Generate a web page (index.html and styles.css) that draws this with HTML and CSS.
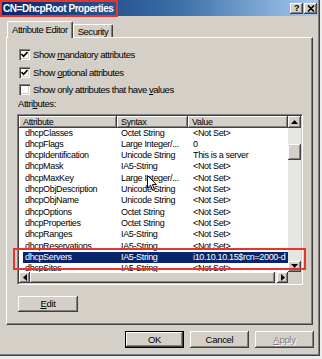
FILE: index.html
```html
<!DOCTYPE html>
<html lang="en">
<head>
    <meta charset="UTF-8">
    <title>CN=DhcpRoot Properties</title>
    <link rel="stylesheet" href="styles.css">
</head>
<body>
    <div class="dialog">
        <div class="titlebar">
            <span class="title">CN=DhcpRoot Properties</span>
            <div class="title-buttons">
                <span class="tbtn help">?</span>
                <span class="tbtn">
                    <svg width="8" height="7" viewBox="0 0 8 7"><path d="M1 0.5 L7 6.5 M7 0.5 L1 6.5" stroke="#000" stroke-width="1.6"/></svg>
                </span>
            </div>
        </div>

        <div class="tabs">
            <div class="tab active">Attribute Editor</div>
            <div class="tab">Security</div>
        </div>

        <div class="panel">
            <div class="option"><span class="check"><svg width="7" height="7" viewBox="0 0 7 7"><path d="M0.5 3 L2.6 5.4 L6.5 1" fill="none" stroke="#000" stroke-width="1.6"/></svg></span><span>Show <u>m</u>andatory attributes</span></div>
            <div class="option"><span class="check"><svg width="7" height="7" viewBox="0 0 7 7"><path d="M0.5 3 L2.6 5.4 L6.5 1" fill="none" stroke="#000" stroke-width="1.6"/></svg></span><span>Show <u>o</u>ptional attributes</span></div>
            <div class="option"><span class="check"></span><span>Show only attributes that have <u>v</u>alues</span></div>
            <div class="label">Attri<u>b</u>utes:</div>

            <div class="listview">
                <div class="lv-body">
                    <div class="lv-header">
                        <span>Attribute</span>
                        <span>Syntax</span>
                        <span>Value</span>
                    </div>
                    <div class="row"><span>dhcpClasses</span><span>Octet String</span><span>&lt;Not Set&gt;</span></div>
                    <div class="row"><span>dhcpFlags</span><span>Large Integer/...</span><span>0</span></div>
                    <div class="row"><span>dhcpIdentification</span><span>Unicode String</span><span>This is a server</span></div>
                    <div class="row"><span>dhcpMask</span><span>IA5-String</span><span>&lt;Not Set&gt;</span></div>
                    <div class="row"><span>dhcpMaxKey</span><span>Large Integer/...</span><span>&lt;Not Set&gt;</span></div>
                    <div class="row"><span>dhcpObjDescription</span><span>Unicode String</span><span>&lt;Not Set&gt;</span></div>
                    <div class="row"><span>dhcpObjName</span><span>Unicode String</span><span>&lt;Not Set&gt;</span></div>
                    <div class="row"><span>dhcpOptions</span><span>Octet String</span><span>&lt;Not Set&gt;</span></div>
                    <div class="row"><span>dhcpProperties</span><span>Octet String</span><span>&lt;Not Set&gt;</span></div>
                    <div class="row"><span>dhcpRanges</span><span>IA5-String</span><span>&lt;Not Set&gt;</span></div>
                    <div class="row"><span>dhcpReservations</span><span>IA5-String</span><span>&lt;Not Set&gt;</span></div>
                    <div class="row selected"><span>dhcpServers</span><span>IA5-String</span><span>i10.10.10.15$rcn=2000-d</span></div>
                    <div class="row"><span>dhcpSites</span><span>IA5-String</span><span>&lt;Not Set&gt;</span></div>
                </div>
                <div class="vscroll">
                    <span class="sbtn"><svg width="7" height="4" viewBox="0 0 7 4"><polygon points="3.5,0 7,4 0,4" fill="#000"/></svg></span>
                    <span class="vthumb"></span>
                    <span class="sbtn down"><svg width="7" height="4" viewBox="0 0 7 4"><polygon points="0,0 7,0 3.5,4" fill="#000"/></svg></span>
                </div>
                <div class="hscroll">
                    <span class="sbtn narrow"><svg width="4" height="7" viewBox="0 0 4 7"><polygon points="4,0 4,7 0,3.5" fill="#000"/></svg></span>
                    <span class="hthumb"></span>
                    <span class="sbtn narrow"><svg width="4" height="7" viewBox="0 0 4 7"><polygon points="0,0 4,3.5 0,7" fill="#000"/></svg></span>
                </div>
                <div class="corner"></div>
            </div>

            <button class="btn edit"><u>E</u>dit</button>
        </div>

        <div class="footer">
            <button class="btn default">OK</button>
            <button class="btn">Cancel</button>
            <button class="btn disabled"><u>A</u>pply</button>
        </div>

        <!-- annotation boxes and pointer drawn over the dialog -->
        <div class="mark mark-title"></div>
        <div class="mark mark-row"></div>
        <svg class="cursor" width="11" height="17" viewBox="0 0 11 17">
            <polygon points="0.5,0.5 0.5,13 3.5,10.2 5.8,15.5 7.6,14.7 5.4,9.6 9.5,9.6" fill="#fff" stroke="#000" stroke-width="1"/>
        </svg>
    </div>
</body>
</html>
```

FILE: styles.css
```css
* {
    box-sizing: border-box;
}
body {
    margin: 0;
    background: #ececec;
    font-family: "Liberation Sans", Arial, sans-serif;
    font-size: 9.5px;
    letter-spacing: -0.45px;
    color: #000;
}
.dialog {
    position: relative;
    width: 320px;
    height: 356px;
    background: #d4d0c8;
    box-shadow: inset -1px -1px #404040, inset -2px -2px #808080;
}

/* title bar */
.titlebar {
    height: 16px;
    margin-right: 2px;
    padding: 0 1px 0 3px;
    display: flex;
    align-items: center;
    background: linear-gradient(to right, #0a246a, #3a6ea5 55%, #a6caf0);
}
.title {
    color: #fff;
    font-weight: bold;
    font-size: 10px;
    letter-spacing: -0.45px;
}
.title-buttons {
    margin-left: auto;
    display: flex;
    gap: 1px;
}
.tbtn {
    width: 13px;
    height: 11px;
    display: flex;
    align-items: center;
    justify-content: center;
    background: #d4d0c8;
    box-shadow: inset -1px -1px #404040, inset 1px 1px #fff, inset -2px -2px #808080;
}
.help {
    font-weight: bold;
    font-size: 9px;
    line-height: 11px;
}

/* tabs */
.tabs {
    display: flex;
    align-items: flex-end;
    height: 16px;
    margin-top: 5px;
    padding-left: 7px;
}
.tab {
    height: 13px;
    padding: 0 4px;
    display: flex;
    align-items: center;
    background: #d4d0c8;
    border: 1px solid;
    border-color: #fff #404040 transparent #fff;
    border-bottom: none;
    border-radius: 2px 2px 0 0;
    box-shadow: inset -1px 0 #808080;
}
.tab.active {
    height: 17px;
    margin-bottom: -1px;
    position: relative;
    z-index: 1;
    padding-bottom: 2px;
}
.panel {
    margin-left: 6px;
    width: 307px;
    height: 288px;
    padding: 8px 10px 0 10px;
    border: 1px solid;
    border-color: #fff #404040 #404040 #fff;
    box-shadow: inset -1px -1px #808080;
}

/* checkboxes */
.option {
    height: 17.5px;
    display: flex;
    align-items: center;
    padding-left: 2px;
}
.check {
    width: 11px;
    height: 11px;
    margin-right: 3px;
    display: flex;
    align-items: center;
    justify-content: center;
    background: #fff;
    box-shadow: inset 1px 1px #808080, inset 2px 2px #404040, inset -1px -1px #fff, inset -2px -2px #d4d0c8;
}
.label {
    height: 10px;
    line-height: 10px;
    padding-left: 1px;
}

/* list view */
.listview {
    width: 286px;
    height: 171px;
    margin-top: 5px;
    padding: 1px;
    font-size: 9px;
    letter-spacing: -0.35px;
    background: #fff;
    border: 1px solid;
    border-color: #808080 #fff #fff #808080;
    box-shadow: inset 1px 1px #404040, inset -1px -1px #d4d0c8;
    display: grid;
    grid-template-columns: 1fr 13px;
    grid-template-rows: 1fr 11px;
}
.lv-body {
    overflow: hidden;
}
.lv-header {
    display: grid;
    grid-template-columns: 98px 71px 100px;
    height: 12px;
}
.lv-header span {
    padding-left: 4px;
    line-height: 12px;
    background: #d4d0c8;
    box-shadow: inset -1px -1px #404040, inset 1px 1px #fff, inset -2px -2px #808080;
}
.row {
    display: grid;
    grid-template-columns: 94px 71px 100px;
    height: 11.33px;
    line-height: 11.33px;
    margin-left: 4px;
    white-space: nowrap;
}
.row span {
    overflow: hidden;
}
.row span:nth-child(1) {
    padding-left: 2px;
}
.row span:nth-child(2) {
    padding-left: 4px;
}
.row span:nth-child(3) {
    padding-left: 5px;
}
.row.selected {
    background: #0a246a;
    color: #fff;
}
.sbtn {
    width: 13px;
    height: 12px;
    flex-shrink: 0;
    display: flex;
    align-items: center;
    justify-content: center;
    background: #d4d0c8;
    box-shadow: inset -1px -1px #404040, inset 1px 1px #fff, inset -2px -2px #808080;
}
.sbtn.down {
    height: 11px;
    margin-top: auto;
}
.sbtn.narrow {
    width: 11px;
    height: 11px;
}
.vscroll {
    display: flex;
    flex-direction: column;
    background: #e8e6e2;
}
.vthumb {
    height: 16px;
    margin-top: 16px;
    background: #d4d0c8;
    box-shadow: inset -1px -1px #404040, inset 1px 1px #fff, inset -2px -2px #808080;
}
.hscroll {
    display: flex;
    background: #e8e6e2;
}
.hthumb {
    flex: 1;
    margin-right: 2px;
    background: #d4d0c8;
    box-shadow: inset -1px -1px #404040, inset 1px 1px #fff, inset -2px -2px #808080;
}
.corner {
    background: #d4d0c8;
}

/* buttons */
.btn {
    width: 59px;
    height: 17px;
    padding: 0;
    font-family: inherit;
    font-size: 9.5px;
    letter-spacing: -0.3px;
    color: #000;
    background: #d4d0c8;
    border: none;
    box-shadow: inset -1px -1px #404040, inset 1px 1px #fff, inset -2px -2px #808080;
}
.btn.edit {
    width: 60px;
    height: 16px;
    margin-top: 11px;
    margin-left: 1px;
}
.btn.default {
    border: 1px solid #000;
}
.btn.disabled {
    color: #808080;
    text-shadow: 1px 1px #fff;
}
.footer {
    display: flex;
    justify-content: flex-end;
    gap: 6px;
    margin-top: 6px;
    padding-right: 6px;
}

/* annotations over the screenshot */
.mark {
    position: absolute;
    border: 2px solid #e8342f;
}
.mark-title {
    left: 0;
    top: 0;
    width: 118px;
    height: 17px;
}
.mark-row {
    left: 13px;
    top: 248px;
    width: 293px;
    height: 22px;
}
.cursor {
    position: absolute;
    left: 147px;
    top: 175px;
}
```
